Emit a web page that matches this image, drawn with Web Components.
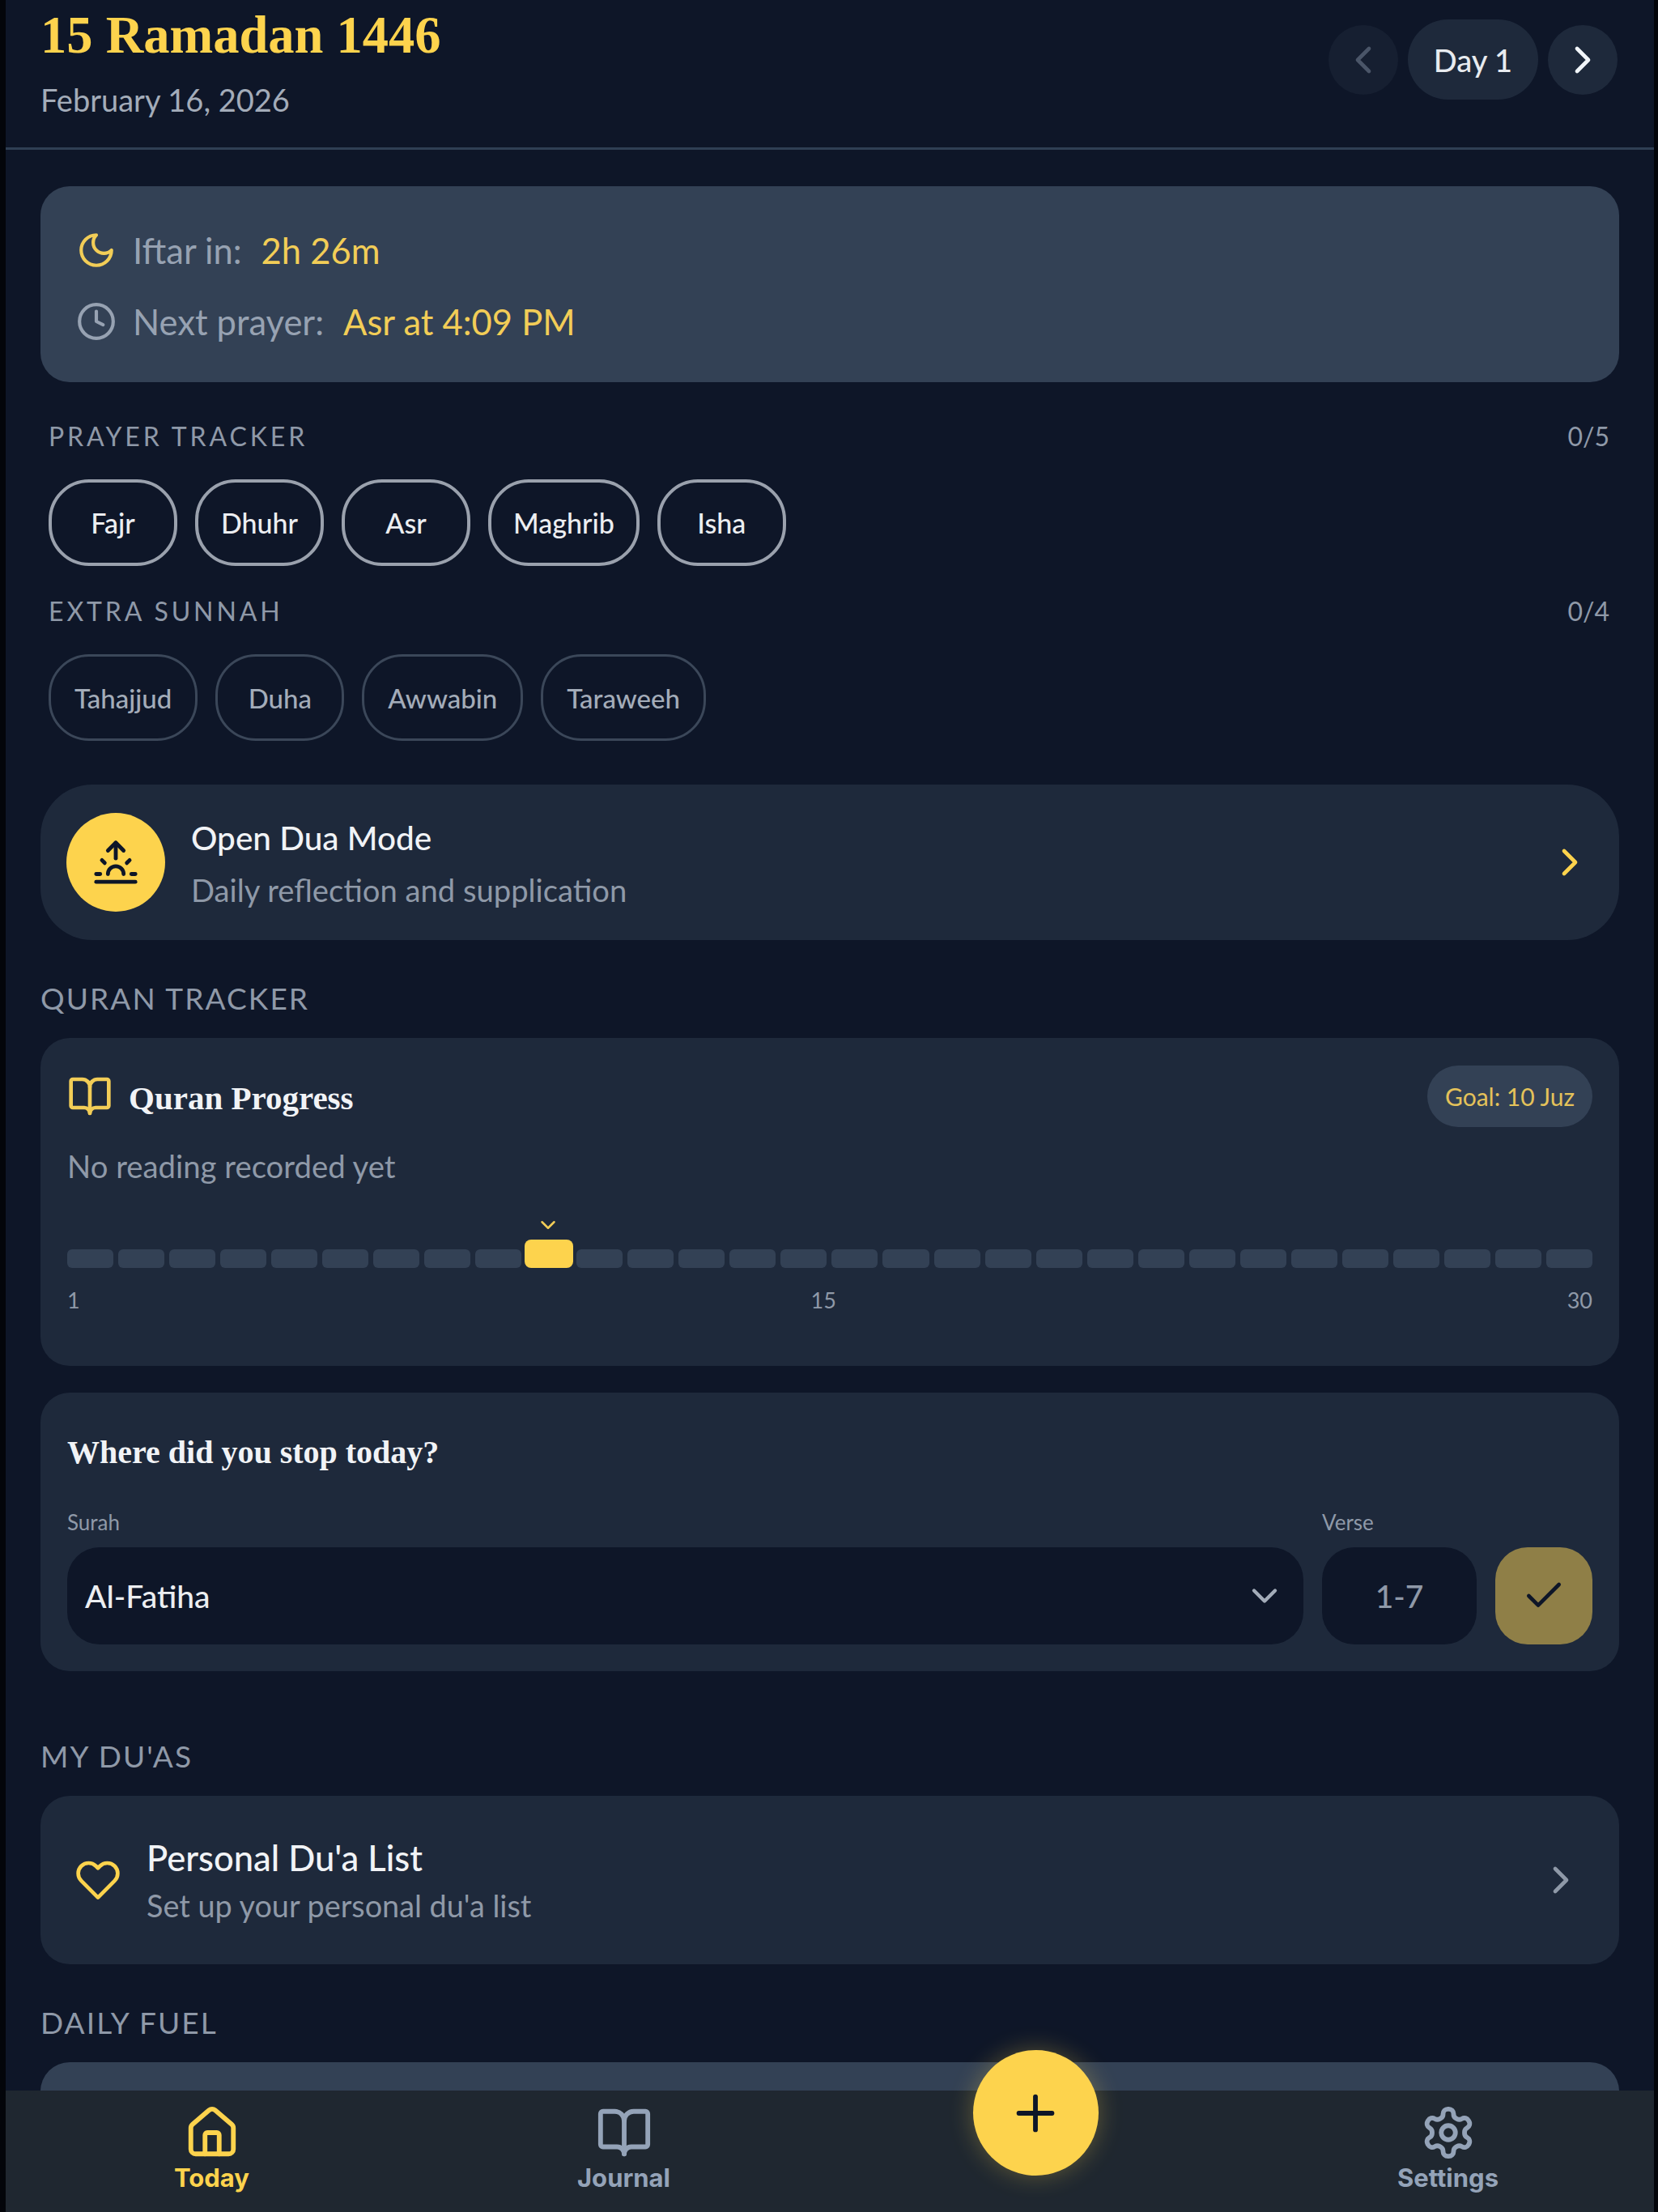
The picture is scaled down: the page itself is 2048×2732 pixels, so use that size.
<!DOCTYPE html>
<html>
<head>
<meta charset="utf-8">
<title>Today</title>
<style>
  html, body { margin: 0; padding: 0; background: #03050a; }
  body { font-family: "Lato", "Liberation Sans", sans-serif; color: #e5e7eb; }
</style>
</head>
<body>
<ramadan-app>
  <day-header slot="header" hijri="15 Ramadan 1446" date="February 16, 2026" day="Day 1"></day-header>

  <countdown-card>
    <countdown-row icon="moon" tone="gold" label="Iftar in:" value="2h 26m"></countdown-row>
    <countdown-row icon="clock" label="Next prayer:" value="Asr at 4:09 PM"></countdown-row>
  </countdown-card>

  <tracker-group label="PRAYER TRACKER" count="0/5" first>
    <prayer-chip>Fajr</prayer-chip>
    <prayer-chip>Dhuhr</prayer-chip>
    <prayer-chip>Asr</prayer-chip>
    <prayer-chip>Maghrib</prayer-chip>
    <prayer-chip>Isha</prayer-chip>
  </tracker-group>
  <tracker-group label="EXTRA SUNNAH" count="0/4">
    <prayer-chip extra>Tahajjud</prayer-chip>
    <prayer-chip extra>Duha</prayer-chip>
    <prayer-chip extra>Awwabin</prayer-chip>
    <prayer-chip extra>Taraweeh</prayer-chip>
  </tracker-group>

  <dua-banner></dua-banner>

  <section-label>QURAN TRACKER</section-label>
  <quran-progress></quran-progress>
  <stop-form></stop-form>

  <section-label>MY DU'AS</section-label>
  <dua-list-link></dua-list-link>

  <section-label>DAILY FUEL</section-label>
  <fuel-card></fuel-card>

  <bottom-nav slot="nav"></bottom-nav>
</ramadan-app>

<script>
const ICONS = {
  moon: '<path d="M12 3a6 6 0 0 0 9 9 9 9 0 1 1-9-9Z"/>',
  clock: '<circle cx="12" cy="12" r="10"/><polyline points="12 6 12 12 16 14"/>',
  sunrise: '<path d="M12 2v8"/><path d="m4.93 10.93 1.41 1.41"/><path d="M2 18h2"/><path d="M20 18h2"/><path d="m19.07 10.93-1.41 1.41"/><path d="M22 22H2"/><path d="m8 6 4-4 4 4"/><path d="M16 18a4 4 0 0 0-8 0"/>',
  book: '<path d="M12 7v14"/><path d="M3 18a1 1 0 0 1-1-1V4a1 1 0 0 1 1-1h5a4 4 0 0 1 4 4 4 4 0 0 1 4-4h5a1 1 0 0 1 1 1v13a1 1 0 0 1-1 1h-6a3 3 0 0 0-3 3 3 3 0 0 0-3-3z"/>',
  heart: '<path d="M20.84 4.61a5.5 5.5 0 0 0-7.78 0L12 5.67l-1.06-1.06a5.5 5.5 0 0 0-7.78 7.78l1.06 1.06L12 21.23l7.78-7.78 1.06-1.06a5.5 5.5 0 0 0 0-7.78z"/>',
  home: '<path d="M15 21v-8a1 1 0 0 0-1-1h-4a1 1 0 0 0-1 1v8"/><path d="M3 10a2 2 0 0 1 .709-1.528l7-5.999a2 2 0 0 1 2.582 0l7 5.999A2 2 0 0 1 21 10v9a2 2 0 0 1-2 2H5a2 2 0 0 1-2-2z"/>',
  gear: '<path d="M12.22 2h-.44a2 2 0 0 0-2 2v.18a2 2 0 0 1-1 1.73l-.43.25a2 2 0 0 1-2 0l-.15-.08a2 2 0 0 0-2.73.73l-.22.38a2 2 0 0 0 .73 2.73l.15.1a2 2 0 0 1 1 1.72v.51a2 2 0 0 1-1 1.74l-.15.09a2 2 0 0 0-.73 2.73l.22.38a2 2 0 0 0 2.73.73l.15-.08a2 2 0 0 1 2 0l.43.25a2 2 0 0 1 1 1.73V20a2 2 0 0 0 2 2h.44a2 2 0 0 0 2-2v-.18a2 2 0 0 1 1-1.73l.43-.25a2 2 0 0 1 2 0l.15.08a2 2 0 0 0 2.73-.73l.22-.39a2 2 0 0 0-.73-2.73l-.15-.08a2 2 0 0 1-1-1.74v-.5a2 2 0 0 1 1-1.74l.15-.09a2 2 0 0 0 .73-2.73l-.22-.38a2 2 0 0 0-2.73-.73l-.15.08a2 2 0 0 1-2 0l-.43-.25a2 2 0 0 1-1-1.73V4a2 2 0 0 0-2-2z"/><circle cx="12" cy="12" r="3"/>',
  plus: '<path d="M5 12h14"/><path d="M12 5v14"/>',
  check: '<path d="M20 6 9 17l-5-5"/>',
  left: '<path d="m15 18-6-6 6-6"/>',
  right: '<path d="m9 18 6-6-6-6"/>',
  down: '<path d="m6 9 6 6 6-6"/>'
};

// small helper, every element below is a template + a class
// setup runs on the clone before it goes in, so nested elements see their attributes when they connect
function define(name, html, setup) {
  const tpl = document.createElement("template");
  tpl.innerHTML = html;
  customElements.define(name, class extends HTMLElement {
    connectedCallback() {
      if (this.shadowRoot) return;
      const root = this.attachShadow({ mode: "open" });
      const content = tpl.content.cloneNode(true);
      if (setup) setup(content, this);
      root.appendChild(content);
    }
  });
}

define("app-icon", `
<style>
  :host { display: inline-flex; flex: none; }
  svg { display: block; width: 100%; height: 100%; fill: none; stroke: currentColor; stroke-linecap: round; stroke-linejoin: round; }
</style>
<svg viewBox="0 0 24 24" stroke-width="2"></svg>
`, (root, el) => {
  const svg = root.querySelector("svg");
  svg.innerHTML = ICONS[el.getAttribute("name")];
  const size = el.getAttribute("size") + "px";
  el.style.width = size;
  el.style.height = size;
  if (el.hasAttribute("stroke")) svg.setAttribute("stroke-width", el.getAttribute("stroke"));
});

define("ramadan-app", `
<style>
  :host { display: block; width: 2048px; height: 2732px; padding: 0 5px 0 7px; box-sizing: border-box; overflow: hidden; }
  .shell { height: 100%; display: flex; flex-direction: column; background: #0e1628; }
  main { flex: 1; min-height: 0; overflow: hidden; padding: 45px 43px 0; display: flex; flex-direction: column; }
</style>
<div class="shell">
  <slot name="header"></slot>
  <main><slot></slot></main>
  <slot name="nav"></slot>
</div>
`);

define("day-header", `
<style>
  :host { display: flex; flex: none; height: 182px; border-bottom: 3px solid #2f3f54; padding: 0 45px 0 43px; justify-content: space-between; }
  h1 { margin: 8px 0 0; font: 700 64.5px/72px "Liberation Serif", serif; color: #fdd34d; }
  p { margin: 20px 0 0; font: 400 38px/46px "Lato", sans-serif; color: #a3acb9; }
  .nav { display: flex; align-items: center; gap: 12px; height: 99px; margin-top: 24px; }
  .round { width: 86px; height: 86px; border-radius: 50%; background: #1e293b; color: #f1f5f9; display: flex; align-items: center; justify-content: center; }
  .round.off { background: #161f31; color: #4a5568; }
  .pill { width: 161px; height: 99px; border-radius: 50px; background: #1e293b; color: #e8ebef; display: flex; align-items: center; justify-content: center; font: 500 38px "Lato", sans-serif; }
</style>
<div>
  <h1></h1>
  <p></p>
</div>
<div class="nav">
  <div class="round off"><app-icon name="left" size="56"></app-icon></div>
  <div class="pill"></div>
  <div class="round"><app-icon name="right" size="56"></app-icon></div>
</div>
`, (root, el) => {
  root.querySelector("h1").textContent = el.getAttribute("hijri");
  root.querySelector("p").textContent = el.getAttribute("date");
  root.querySelector(".pill").textContent = el.getAttribute("day");
});

define("countdown-card", `
<style>
  :host { display: flex; flex: none; flex-direction: column; justify-content: center; gap: 38px; height: 242px; padding: 3px 44px 0; box-sizing: border-box; background: #334155; border-radius: 36px; }
</style>
<slot></slot>
`);

define("countdown-row", `
<style>
  :host { display: flex; align-items: center; height: 50px; font: 400 43.5px/50px "Lato", sans-serif; color: #97a2b2; }
  app-icon { margin-right: 20px; }
  .value { margin-left: 24px; color: #f2cd57; }
</style>
<app-icon size="50"></app-icon><span class="label"></span><span class="value"></span>
`, (root, el) => {
  const icon = root.querySelector("app-icon");
  icon.setAttribute("name", el.getAttribute("icon"));
  if (el.getAttribute("tone") === "gold") icon.style.color = "#f2cd57";
  root.querySelector(".label").textContent = el.getAttribute("label");
  root.querySelector(".value").textContent = el.getAttribute("value");
});

define("tracker-group", `
<style>
  :host { display: block; flex: none; margin: 36px 12px 0 10px; }
  :host([first]) { margin-top: 47px; }
  .head { display: flex; justify-content: space-between; height: 40px; align-items: center; font: 400 32px/40px "Lato", sans-serif; color: #8f99a8; letter-spacing: 3.9px; }
  .count { letter-spacing: 0; }
  .chips { display: flex; gap: 22px; margin-top: 33px; }
</style>
<div class="head"><span class="label"></span><span class="count"></span></div>
<div class="chips"><slot></slot></div>
`, (root, el) => {
  root.querySelector(".label").textContent = el.getAttribute("label");
  root.querySelector(".count").textContent = el.getAttribute("count");
});

define("prayer-chip", `
<style>
  :host { display: flex; align-items: center; justify-content: center; height: 107px; min-width: 159px; padding: 0 27px; box-sizing: border-box; border: 4px solid #9aa1ad; border-radius: 50px; font: 500 34px "Lato", sans-serif; color: #eceef1; }
  :host([extra]) { border: 3px solid #3b4759; color: #a3acb9; font-size: 33px; padding: 0 29px; }
</style>
<slot></slot>
`);

define("dua-banner", `
<style>
  :host { display: flex; flex: none; align-items: center; height: 192px; margin-top: 54px; padding: 0 33px 0 32px; box-sizing: border-box; background: #1e293b; border-radius: 64px; }
  .sun { width: 122px; height: 122px; border-radius: 50%; background: #fdd34d; color: #0e1628; display: flex; align-items: center; justify-content: center; }
  .text { flex: 1; margin-left: 32px; }
  .title { font: 500 40.5px/52px "Lato", sans-serif; color: #f1f3f6; }
  .sub { margin-top: 15px; font: 400 38.2px/46px "Lato", sans-serif; color: #8f99a8; }
  app-icon.go { color: #fdd34d; }
</style>
<div class="sun"><app-icon name="sunrise" size="58"></app-icon></div>
<div class="text">
  <div class="title">Open Dua Mode</div>
  <div class="sub">Daily reflection and supplication</div>
</div>
<app-icon class="go" name="right" size="56"></app-icon>
`);

define("section-label", `
<style>
  :host { display: block; flex: none; margin: 50px 0 27px; font: 400 37px/44px "Lato", sans-serif; color: #8f99a8; letter-spacing: 2.1px; }
</style>
<slot></slot>
`);

define("juz-strip", `
<style>
  :host { display: block; margin-top: 43px; }
  .mark { height: 16px; position: relative; }
  .mark app-icon { position: absolute; left: 579px; top: -8px; color: #f2cd57; }
  .bar { display: flex; align-items: flex-end; gap: 6px; height: 35px; margin-top: 9px; }
  .seg { flex: 1; height: 23px; border-radius: 6px; background: #334155; }
  .seg.now { flex: none; width: 60px; height: 35px; margin: 0 -2px; background: #fdd34d; border-radius: 8px; position: relative; }
  .ticks { display: flex; justify-content: space-between; margin-top: 23px; font: 400 27px/34px "Lato", sans-serif; color: #8f99a8; }
</style>
<div class="mark"><app-icon name="down" size="30"></app-icon></div>
<div class="bar"></div>
<div class="ticks"><span>1</span><span>15</span><span>30</span></div>
`, (root) => {
  const bar = root.querySelector(".bar");
  for (let i = 1; i <= 30; i++) {
    const seg = document.createElement("div");
    seg.className = i === 10 ? "seg now" : "seg";
    bar.appendChild(seg);
  }
});

define("quran-progress", `
<style>
  :host { display: block; flex: none; height: 405px; padding: 34px 33px 0; box-sizing: border-box; background: #1e293b; border-radius: 36px; }
  .top { display: flex; align-items: center; justify-content: space-between; height: 76px; }
  .name { display: flex; align-items: center; gap: 20px; color: #f2cd57; }
  h2 { margin: 4px 0 0; font: 700 41px/48px "Liberation Serif", serif; color: #f1f3f6; }
  .goal { height: 76px; padding: 0 22px; border-radius: 38px; background: #334155; color: #e4c25a; display: flex; align-items: center; font: 400 30px "Lato", sans-serif; }
  .empty { margin-top: 25px; font: 400 38.3px/46px "Lato", sans-serif; color: #8f99a8; }
</style>
<div class="top">
  <div class="name"><app-icon name="book" size="56"></app-icon><h2>Quran Progress</h2></div>
  <div class="goal">Goal: 10 Juz</div>
</div>
<div class="empty">No reading recorded yet</div>
<juz-strip></juz-strip>
`);

define("stop-form", `
<style>
  :host { display: block; flex: none; height: 344px; margin: 33px 0 33px; padding: 50px 33px 0; box-sizing: border-box; background: #1e293b; border-radius: 36px; }
  h3 { margin: 0; font: 700 40px/48px "Liberation Serif", serif; color: #f1f3f6; }
  .row { display: grid; grid-template-columns: 1fr 191px 120px; column-gap: 23px; margin-top: 46px; }
  label { font: 400 26px/32px "Lato", sans-serif; color: #8f99a8; height: 32px; margin-bottom: 15px; }
  .box { height: 120px; border-radius: 40px; background: #0e1628; display: flex; align-items: center; box-sizing: border-box; font: 500 39px "Lato", sans-serif; }
  .surah { padding: 0 22px; justify-content: space-between; color: #eceef1; }
  .surah app-icon { color: #a3acb9; }
  .verse { justify-content: center; color: #8f99a8; }
  .save { background: #8f7f47; color: #0e1628; justify-content: center; grid-column: 3; }
</style>
<h3>Where did you stop today?</h3>
<div class="row">
  <label>Surah</label><label>Verse</label><span></span>
  <div class="box surah">Al-Fatiha<app-icon name="down" size="52"></app-icon></div>
  <div class="box verse">1-7</div>
  <div class="box save"><app-icon name="check" size="56"></app-icon></div>
</div>
`);

define("dua-list-link", `
<style>
  :host { display: flex; flex: none; align-items: center; height: 208px; padding: 0 44px 0 43px; box-sizing: border-box; background: #1e293b; border-radius: 36px; }
  .heart { color: #fdd34d; }
  .text { flex: 1; margin-left: 32px; }
  .title { font: 500 43.5px/54px "Lato", sans-serif; color: #f1f3f6; }
  .sub { margin-top: 10px; font: 400 37.8px/46px "Lato", sans-serif; color: #8f99a8; }
  .go { color: #8f99a8; }
</style>
<app-icon class="heart" name="heart" size="56"></app-icon>
<div class="text">
  <div class="title">Personal Du'a List</div>
  <div class="sub">Set up your personal du'a list</div>
</div>
<app-icon class="go" name="right" size="56"></app-icon>
`);

define("fuel-card", `
<style>
  :host { display: block; flex: none; height: 300px; background: #334155; border-radius: 36px; }
</style>
`);

define("nav-item", `
<style>
  :host { display: flex; flex-direction: column; align-items: center; padding-top: 17px; color: #94a3b8; font: 700 31px/38px "Inter", sans-serif; }
  :host([active]) { color: #fdd34d; }
  .lbl { margin-top: 2px; }
</style>
<app-icon size="70"></app-icon>
<span class="lbl"><slot></slot></span>
`, (root, el) => {
  root.querySelector("app-icon").setAttribute("name", el.getAttribute("icon"));
});

define("bottom-nav", `
<style>
  :host { display: grid; flex: none; grid-template-columns: repeat(4, 1fr); height: 150px; background: #1f2730; position: relative; }
  .slot { position: relative; }
  .fab { position: absolute; left: 50%; top: -50px; width: 155px; height: 155px; margin-left: -78px; border-radius: 50%; background: #fdd34d; color: #0e1628; display: flex; align-items: center; justify-content: center; box-shadow: 0 0 30px rgba(253, 211, 77, .3); }
</style>
<nav-item icon="home" active>Today</nav-item>
<nav-item icon="book">Journal</nav-item>
<div class="slot"><div class="fab"><app-icon name="plus" size="70"></app-icon></div></div>
<nav-item icon="gear">Settings</nav-item>
`);
</script>
</body>
</html>
